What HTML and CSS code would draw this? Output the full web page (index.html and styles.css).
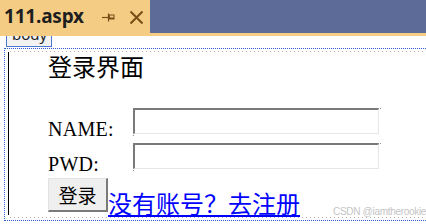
FILE: index.html
```html
<!DOCTYPE html>
<html>
<head>
<meta charset="utf-8">
<link rel="stylesheet" href="styles.css">
</head>
<body>
<div class="tabbar">
  <div class="tab">
    <span class="tab-title">111.aspx</span>
    <svg class="pin" width="14" height="10" viewBox="0 0 14 10"><path d="M0 5.5H6" stroke="#7a4d17" stroke-width="1.2"/><path d="M6.5 1.5V9.5" stroke="#7a4d17" stroke-width="1.2"/><rect x="7" y="2.5" width="5.5" height="5" fill="#7a4d17"/><rect x="8" y="3.5" width="3.5" height="2" fill="#f5cc84"/></svg>
    <svg class="close" width="15" height="15" viewBox="0 0 15 15"><path d="M1.5 1.5L13.5 13.5M13.5 1.5L1.5 13.5" stroke="#7a4d17" stroke-width="2"/></svg>
  </div>
</div>
<div class="strip"></div>
<div class="surface">
  <div class="tag"><span>body</span></div>
  <div class="page">
    <div class="form">
      <div class="content">
        <h2 class="title">登录界面</h2>
        <div class="row">
          <span class="label">NAME:</span>
          <span class="field"><input type="text" class="box"></span>
        </div>
        <div class="row">
          <span class="label">PWD:</span>
          <span class="field"><input type="password" class="box"></span>
        </div>
        <div class="row row-last">
          <button class="btn">登录</button>
          <a class="link" href="#">没有账号？去注册</a>
        </div>
      </div>
    </div>
  </div>
  <div class="watermark">CSDN @iamtherookie</div>
</div>
</body>
</html>
```
FILE: styles.css
```css
* { box-sizing: border-box; }
html, body { margin: 0; padding: 0; }
body {
  width: 426px;
  height: 224px;
  overflow: hidden;
  background: #ffffff;
  font-family: "Liberation Serif", serif;
}
.tabbar {
  height: 33px;
  background: #5d6b99;
  display: flex;
}
.tab {
  width: 150px;
  height: 33px;
  background: #f5cc84;
  display: flex;
  align-items: center;
  padding-left: 4px;
}
.tab-title {
  font-family: "Noto Sans", sans-serif;
  font-weight: 700;
  font-size: 19px;
  color: #1e1e1e;
  line-height: 33px;
  letter-spacing: -0.2px;
}
.pin { margin-left: 18px; margin-top: 1px; }
.close { margin-left: 13px; margin-top: 1px; }
.strip {
  height: 3px;
  background: #f5cc84;
}
.surface {
  position: relative;
}
.tag {
  margin-left: 6px;
  width: 46px;
  height: 11px;
  border: 1px solid #4a78d0;
  border-top: none;
  background: #f2f2f2;
  overflow: hidden;
  margin-bottom: 1px;
}
.tag span {
  display: block;
  font-family: "Noto Sans", sans-serif;
  font-size: 15px;
  line-height: 15px;
  margin-top: -9px;
  padding-left: 5px;
  color: #1e1e1e;
}
.page {
  margin-left: 4px;
  height: 173px;
  border-top: 1px dotted #2f5fd0;
  border-left: 1px dotted #2f5fd0;
  border-bottom: 1px dotted #2f5fd0;
  padding: 2px 0 2px 3px;
}
.form {
  height: 167px;
  padding-top: 1px;
  background:
    repeating-linear-gradient(90deg, #b8b8b8 0 1px, transparent 1px 4px) left top / 100% 1px no-repeat,
    repeating-linear-gradient(90deg, #b8b8b8 0 1px, transparent 1px 4px) left bottom / 100% 1px no-repeat;
  background-position: 2px 0, 2px 100%;
}
.content {
  height: 163px;
  border-left: 1px solid #000;
  padding: 2px 0 0 39px;
}
.title {
  margin: 0 0 30px 0;
  font-family: "Noto Sans CJK SC", sans-serif;
  font-weight: 400;
  font-size: 24px;
  line-height: 24px;
  color: #000;
}
.row {
  display: flex;
  align-items: flex-start;
  height: 35px;
}
.label {
  width: 85px;
  margin-top: 11px;
  font-family: "Liberation Serif", serif;
  font-size: 20px;
  line-height: 20px;
  letter-spacing: 0.3px;
  color: #000;
}
.field {
  position: relative;
  display: block;
}
.field::before {
  content: "";
  position: absolute;
  right: -2px;
  top: 0;
  width: 1px;
  height: 1px;
  background: #8a8a8a;
}
.field::after {
  content: "";
  position: absolute;
  left: 0;
  bottom: -2px;
  width: 1px;
  height: 1px;
  background: #8a8a8a;
}
.box {
  display: block;
  width: 246px;
  height: 26px;
  margin: 0;
  padding: 0;
  background: #fff;
  border-top: 2px solid #7a7a7a;
  border-left: 2px solid #7a7a7a;
  border-right: 1px solid #e6e6e6;
  border-bottom: 1px solid #e6e6e6;
  outline: none;
}
.row-last { height: 37px; }
.btn {
  width: 60px;
  height: 34px;
  margin: 0;
  padding: 0;
  background: #efefef;
  border-top: 1px solid #e2e2e2;
  border-left: 1px solid #e2e2e2;
  border-right: 2px solid #7a7a7a;
  border-bottom: 2px solid #7a7a7a;
  font-family: "Noto Sans CJK SC", sans-serif;
  font-size: 19px;
  line-height: 20px;
  color: #000;
}
.link {
  margin-top: 13px;
  font-family: "Noto Sans CJK SC", sans-serif;
  font-size: 24px;
  line-height: 24px;
  color: #0000ff;
  text-decoration: underline;
  white-space: nowrap;
}
.watermark {
  position: absolute;
  left: 333px;
  top: 170px;
  font-family: "Liberation Sans", sans-serif;
  font-size: 10px;
  letter-spacing: -0.3px;
  color: #c4c4c4;
  line-height: 12px;
  white-space: nowrap;
}
```
